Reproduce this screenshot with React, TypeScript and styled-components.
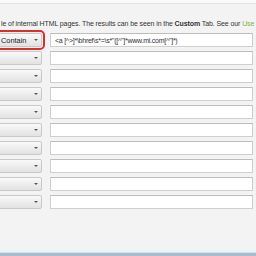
import styled, { createGlobalStyle } from "styled-components";

const GlobalStyle = createGlobalStyle`
  html, body {
    margin: 0;
    padding: 0;
    background: #f3f3f3;
  }
`;

const Page = styled.div`
  display: flex;
  flex-direction: column;
  width: 256px;
  height: 256px;
  overflow: hidden;
  background: #f3f3f3;
  font-family: "Liberation Sans", Arial, sans-serif;
  color: #333;
`;

const TopEdge = styled.div`
  height: 3px;
  background: #fafafa;
  border-bottom: 1px solid #dde3e8;
`;

const Description = styled.p`
  margin: 14px 0 0 1px;
  font-size: 7px;
  letter-spacing: -0.1px;
  line-height: 11px;
  white-space: nowrap;
  color: #333;
  b {
    font-weight: 700;
  }
`;

const Link = styled.span`
  color: #7cb342;
`;

const Rules = styled.div`
  display: flex;
  flex-direction: column;
  gap: 4px;
  margin: 4px 0 0 -30px;
`;

const Row = styled.div`
  display: flex;
  gap: 8px;
  height: 14px;
`;

const Select = styled.div<{ $active?: boolean }>`
  display: flex;
  align-items: center;
  justify-content: space-between;
  box-sizing: border-box;
  width: 72px;
  height: 14px;
  padding: 0 3px 0 30px;
  border: 1px solid #c9c9c9;
  border-radius: 2px;
  background: linear-gradient(#f9f9f9, #e2e2e2);
  font-size: 7.4px;
  color: #222;
  outline: ${(p) => (p.$active ? "2px solid #d8302b" : "none")};
  outline-offset: 1px;
`;

const Caret = styled.span`
  width: 0;
  height: 0;
  border-left: 2px solid transparent;
  border-right: 2px solid transparent;
  border-top: 2px solid #555;
`;

const Field = styled.div`
  flex: 1;
  display: flex;
  align-items: center;
  box-sizing: border-box;
  height: 14px;
  margin-right: 3px;
  padding-left: 4px;
  background: #fff;
  border: 1px solid #cfcfcf;
  border-top-color: #bdbdbd;
  font-size: 7px;
  letter-spacing: -0.25px;
  color: #333;
  white-space: nowrap;
  overflow: hidden;
`;

const Spacer = styled.div`
  flex: 1;
  background: linear-gradient(#f3f3f3 80%, #eef3f6);
`;

const BottomEdge = styled.div`
  height: 3px;
  background: #a9bccb;
  border-top: 1px solid #d6e2ea;
`;

const rules = [
  { op: "Contain", value: '<a [^>]*\\bhref\\s*=\\s*"([^"]*www.mi.com[^"]*)' },
  ...Array.from({ length: 9 }, () => ({ op: "", value: "" })),
];

export default function App() {
  return (
    <Page>
      <GlobalStyle />
      <TopEdge />
      <Description>
        le of internal HTML pages. The results can be seen in the <b>Custom</b> Tab. See our <Link>Use</Link>
      </Description>
      <Rules>
        {rules.map((r, i) => (
          <Row key={i}>
            <Select $active={i === 0}>
              <span>{r.op}</span>
              <Caret />
            </Select>
            <Field>{r.value}</Field>
          </Row>
        ))}
      </Rules>
      <Spacer />
      <BottomEdge />
    </Page>
  );
}
